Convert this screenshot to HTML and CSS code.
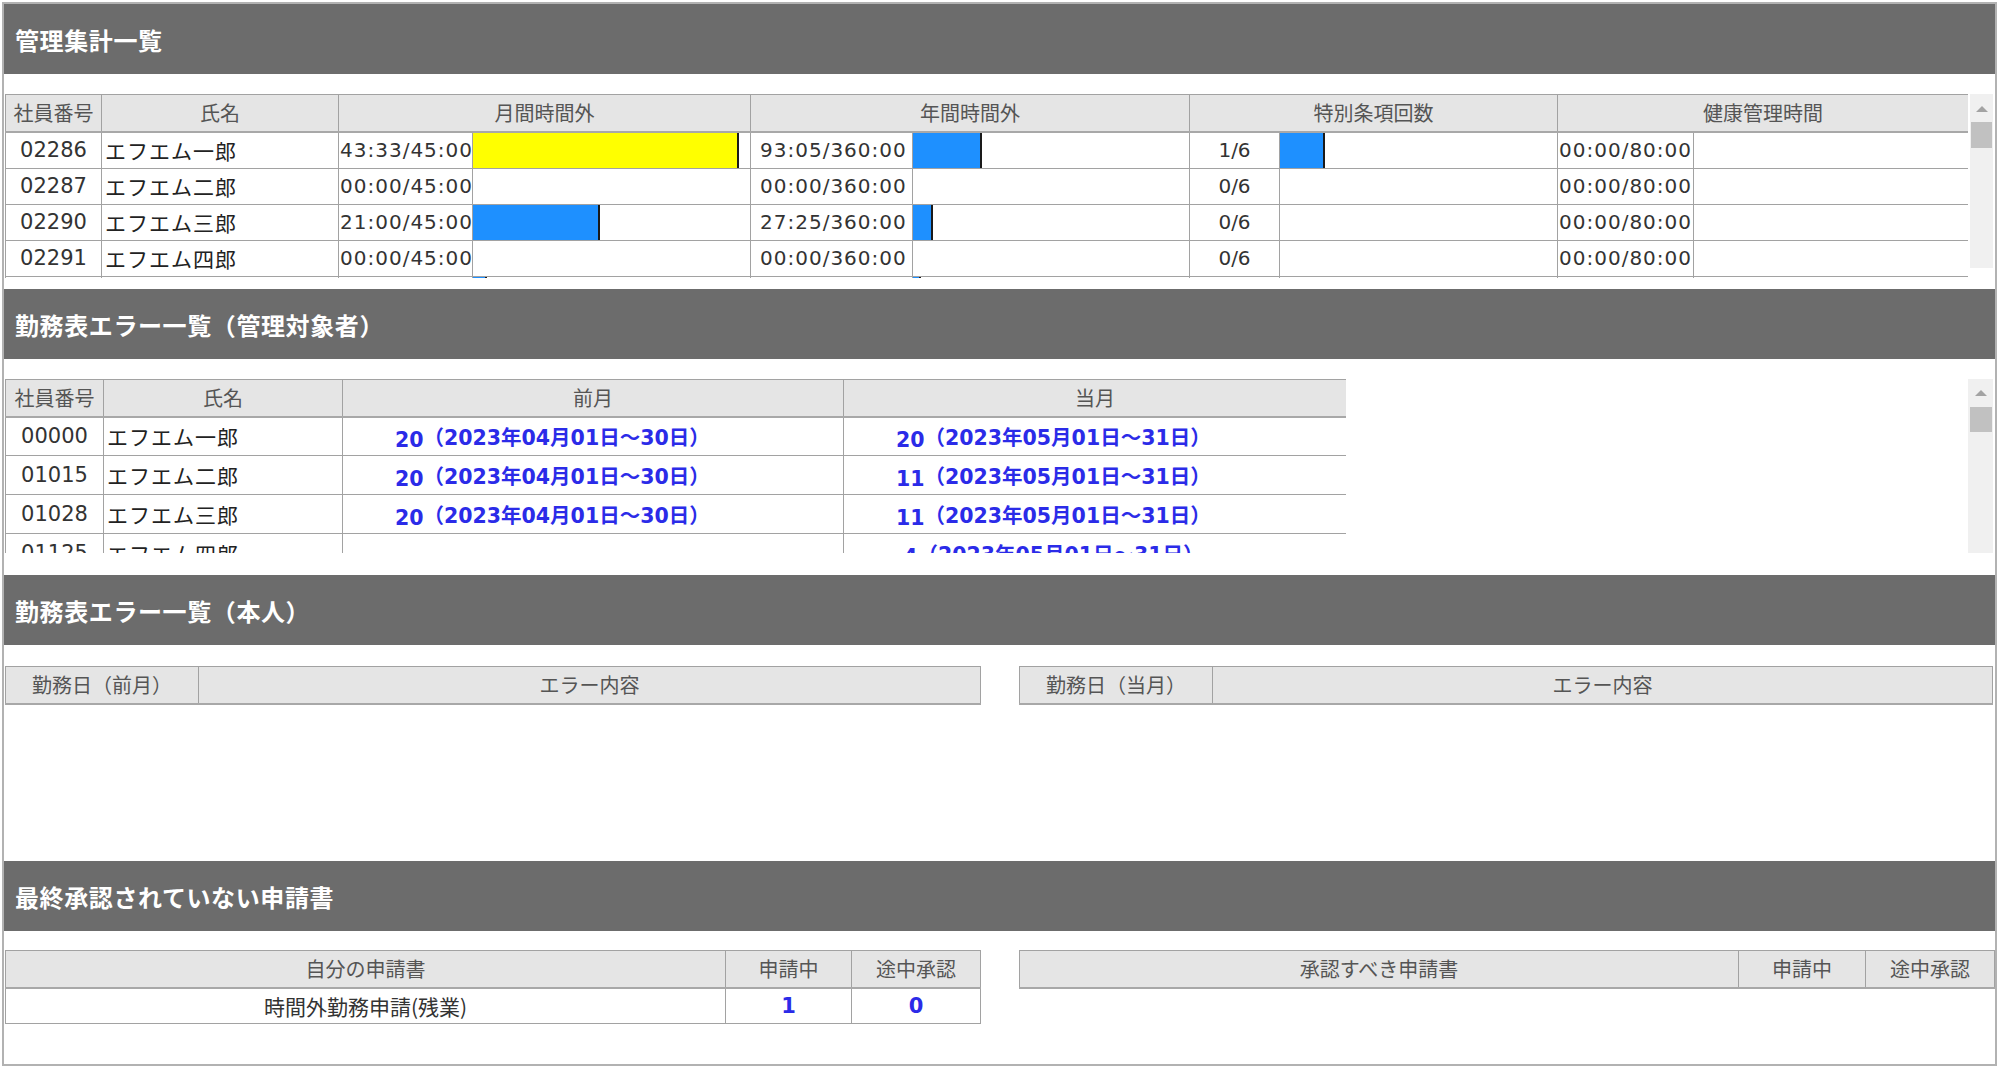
FILE: index.html
```html
<!DOCTYPE html>
<html lang="ja">
<head>
<meta charset="utf-8">
<title>管理集計一覧</title>
<link rel="stylesheet" href="styles.css">
</head>
<body>
<div class="frame">
  <div class="sec-head">管理集計一覧</div>
  <div class="sec-body sb1">
    <div class="wrap1">
      <table class="tbl t1">
        <colgroup>
          <col class="c96"><col class="c237"><col class="c134"><col class="c278"><col class="c162"><col class="c277"><col class="c90"><col class="c278"><col class="c136"><col class="c275">
        </colgroup>
        <thead>
          <tr><th>社員番号</th><th>氏名</th><th colspan="2">月間時間外</th><th colspan="2">年間時間外</th><th colspan="2">特別条項回数</th><th colspan="2">健康管理時間</th></tr>
        </thead>
        <tbody>
          <tr>
            <td class="id">02286</td><td class="name">エフエム一郎</td>
            <td class="time">43:33/45:00</td><td class="barcell"><div class="bar warn" style="width:96%"></div></td>
            <td class="time y">93:05/360:00</td><td class="barcell"><div class="bar" style="width:25%"></div></td>
            <td class="cnt">1/6</td><td class="barcell"><div class="bar" style="width:16.3%"></div></td>
            <td class="time">00:00/80:00</td><td class="barcell"></td>
          </tr>
          <tr>
            <td class="id">02287</td><td class="name">エフエム二郎</td>
            <td class="time">00:00/45:00</td><td class="barcell"></td>
            <td class="time y">00:00/360:00</td><td class="barcell"></td>
            <td class="cnt">0/6</td><td class="barcell"></td>
            <td class="time">00:00/80:00</td><td class="barcell"></td>
          </tr>
          <tr>
            <td class="id">02290</td><td class="name">エフエム三郎</td>
            <td class="time">21:00/45:00</td><td class="barcell"><div class="bar" style="width:46%"></div></td>
            <td class="time y">27:25/360:00</td><td class="barcell"><div class="bar" style="width:7.3%"></div></td>
            <td class="cnt">0/6</td><td class="barcell"></td>
            <td class="time">00:00/80:00</td><td class="barcell"></td>
          </tr>
          <tr>
            <td class="id">02291</td><td class="name">エフエム四郎</td>
            <td class="time">00:00/45:00</td><td class="barcell"></td>
            <td class="time y">00:00/360:00</td><td class="barcell"></td>
            <td class="cnt">0/6</td><td class="barcell"></td>
            <td class="time">00:00/80:00</td><td class="barcell"></td>
          </tr>
          <tr>
            <td class="id"></td><td class="name"></td>
            <td class="time"></td><td class="barcell"><div class="bar" style="width:5%"></div></td>
            <td class="time y"></td><td class="barcell"><div class="bar" style="width:3%"></div></td>
            <td class="cnt"></td><td class="barcell"></td>
            <td class="time"></td><td class="barcell"></td>
          </tr>
        </tbody>
      </table>
    </div>
    <div class="vscroll vs1"><div class="arrow"></div><div class="thumb"></div></div>
  </div>

  <div class="sec-head">勤務表エラー一覧（管理対象者）</div>
  <div class="sec-body sb2">
    <div class="wrap2">
      <table class="tbl t2">
        <colgroup><col class="c98"><col class="c239"><col class="c501"><col class="c503"></colgroup>
        <thead>
          <tr><th>社員番号</th><th>氏名</th><th>前月</th><th>当月</th></tr>
        </thead>
        <tbody>
          <tr><td class="id">00000</td><td class="name">エフエム一郎</td><td class="err"><span class="n">20</span>（2023年04月01日～30日）</td><td class="err"><span class="n">20</span>（2023年05月01日～31日）</td></tr>
          <tr><td class="id">01015</td><td class="name">エフエム二郎</td><td class="err"><span class="n">20</span>（2023年04月01日～30日）</td><td class="err"><span class="n">11</span>（2023年05月01日～31日）</td></tr>
          <tr><td class="id">01028</td><td class="name">エフエム三郎</td><td class="err"><span class="n">20</span>（2023年04月01日～30日）</td><td class="err"><span class="n">11</span>（2023年05月01日～31日）</td></tr>
          <tr><td class="id">01125</td><td class="name">エフエム四郎</td><td class="err"></td><td class="err"><span class="n">&nbsp;4</span>（2023年05月01日～31日）</td></tr>
        </tbody>
      </table>
    </div>
    <div class="vscroll vs2"><div class="arrow"></div><div class="thumb"></div></div>
  </div>

  <div class="sec-head">勤務表エラー一覧（本人）</div>
  <div class="sec-body sb3">
    <table class="tbl t3a">
      <colgroup><col class="c193"><col class="c782"></colgroup>
      <thead><tr><th>勤務日（前月）</th><th>エラー内容</th></tr></thead>
    </table>
    <table class="tbl t3b">
      <colgroup><col class="c193"><col class="c780"></colgroup>
      <thead><tr><th>勤務日（当月）</th><th>エラー内容</th></tr></thead>
    </table>
  </div>

  <div class="sec-head">最終承認されていない申請書</div>
  <div class="sec-body sb4">
    <table class="tbl t4a">
      <colgroup><col class="c720"><col class="c126"><col class="c129"></colgroup>
      <thead><tr><th>自分の申請書</th><th>申請中</th><th>途中承認</th></tr></thead>
      <tbody>
        <tr><td class="app">時間外勤務申請(残業)</td><td class="num">1</td><td class="num">0</td></tr>
      </tbody>
    </table>
    <table class="tbl t4b">
      <colgroup><col class="c719"><col class="c127"><col class="c129"></colgroup>
      <thead><tr><th>承認すべき申請書</th><th>申請中</th><th>途中承認</th></tr></thead>
    </table>
  </div>
</div>
</body>
</html>
```
FILE: styles.css
```css
* { box-sizing: border-box; }
html, body { margin: 0; padding: 0; background: #fff; }
body {
  font-family: "DejaVu Sans", "Noto Sans CJK JP", sans-serif;
  color: #333;
}
.frame {
  margin: 2px 0 0 2px;
  width: 1995px;
  height: 1064px;
  border: 2px solid #b2b2b2;
  overflow: hidden;
}
.sec-head {
  height: 70px;
  background: #6c6c6c;
  color: #fff;
  font-family: "Noto Sans CJK JP", sans-serif;
  font-weight: bold;
  font-size: 24px;
  letter-spacing: 0.6px;
  padding-left: 11px;
  display: flex;
  align-items: center;
}
.sec-body { padding-left: 1px; }
.sb1 {
  height: 215px;
  padding-top: 20px;
  display: flex;
  align-items: flex-start;
  gap: 2px;
}
.sb2 {
  height: 216px;
  padding-top: 20px;
  padding-right: 2px;
  display: flex;
  align-items: flex-start;
  justify-content: space-between;
}
.sb3, .sb4 {
  display: grid;
  grid-template-columns: 975px 975px;
  column-gap: 39px;
  align-items: start;
}
.sb3 { height: 216px; padding-top: 21px; }
.sb4 { height: 133px; padding-top: 19px; }

.wrap1 { width: 1963px; height: 184px; overflow: hidden; }
.wrap2 { width: 1341px; height: 174px; overflow: hidden; }

.vscroll {
  background: #f0f0f0;
  display: flex;
  flex-direction: column;
  align-items: center;
}
.vs1 { width: 23px; height: 174px; padding-top: 12px; }
.vs2 { width: 25px; height: 174px; padding-top: 11px; }
.arrow {
  width: 0; height: 0;
  border-left: 6px solid transparent;
  border-right: 6px solid transparent;
  border-bottom: 6px solid #a3a3a3;
}
.thumb { background: #c1c1c1; }
.vs1 .thumb { margin-top: 10px; width: 21px; height: 26px; }
.vs2 .thumb { margin-top: 11px; width: 22px; height: 25px; }

.tbl {
  border-collapse: collapse;
  table-layout: fixed;
}
.t1 { width: 1963px; }
.t2 { width: 1341px; }
.t3a { width: 975px; }
.t3b { width: 973px; }
.t4a, .t4b { width: 975px; }

.c90 { width: 90px; } .c96 { width: 96px; } .c98 { width: 98px; }
.c126 { width: 126px; } .c127 { width: 127px; } .c129 { width: 129px; }
.c134 { width: 134px; } .c136 { width: 136px; } .c162 { width: 162px; }
.c193 { width: 193px; } .c237 { width: 237px; } .c239 { width: 239px; }
.c275 { width: 275px; } .c277 { width: 277px; } .c278 { width: 278px; }
.c501 { width: 501px; } .c503 { width: 503px; }
.c719 { width: 719px; } .c720 { width: 720px; }
.c780 { width: 780px; } .c782 { width: 782px; }

.tbl th {
  background: #e5e5e5;
  color: #555;
  font-family: "Noto Sans CJK JP", sans-serif;
  font-weight: normal;
  font-size: 20px;
  height: 37px;
  padding: 0;
  text-align: center;
  border: 1px solid #a2a2a2;
  border-bottom: 2px solid #a8a8a8;
  white-space: nowrap;
  overflow: hidden;
}
.tbl td {
  border: 1px solid #a2a2a2;
  padding: 0;
  font-size: 20px;
  white-space: nowrap;
  overflow: hidden;
  color: #333;
}
.t1 td { height: 36px; }
.t2 td { height: 39px; }
.t4a td { height: 36px; }

.id { text-align: center; font-size: 21px !important; }
.name {
  font-family: "Noto Sans CJK JP", sans-serif;
  font-size: 21px !important;
  letter-spacing: 1px;
  padding-left: 3px !important;
  color: #222 !important;
}
.time { letter-spacing: 1px; padding-left: 1px !important; }
.time.y { padding-left: 9px !important; }
.cnt { text-align: center; }
.barcell { vertical-align: middle; }
.bar {
  height: 35px;
  background: #1e90ff;
  border-right: 2px solid #1a1a1a;
}
.bar.warn { background: #ffff00; }

.err {
  font-weight: bold;
  color: #2b2be8 !important;
  font-size: 20.5px !important;
  padding-left: 52px !important;
}
.err .n { position: relative; top: 2px; }
.app {
  text-align: center;
  font-family: "Noto Sans CJK JP", sans-serif;
  font-size: 21px !important;
  color: #333;
}
.num {
  text-align: center;
  font-weight: bold;
  color: #2b2be8 !important;
  font-size: 21px !important;
}
```
